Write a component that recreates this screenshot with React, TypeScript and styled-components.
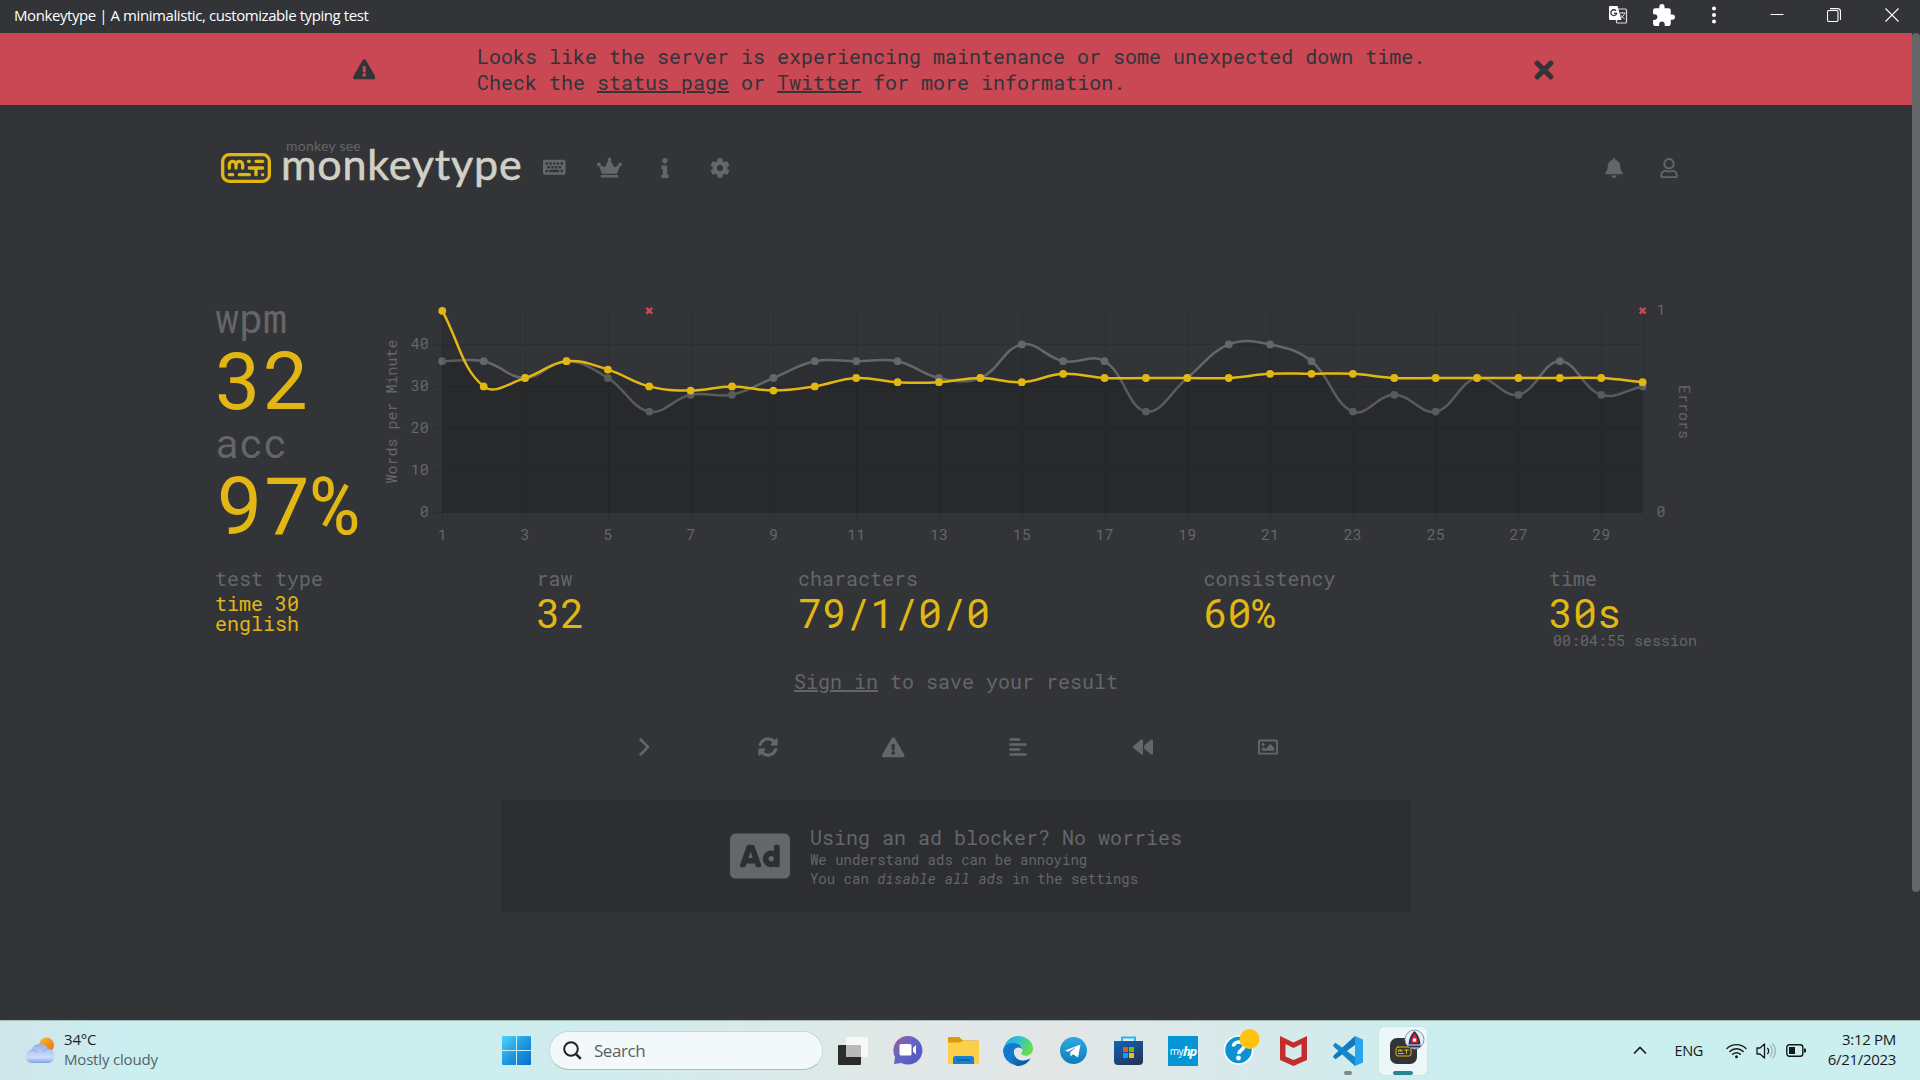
import React from "react";
import styled, { createGlobalStyle } from "styled-components";
import { FaAd, FaExclamationTriangle, FaTimes, FaKeyboard, FaCrown, FaInfo, FaCog, FaBell, FaRegUser, FaRegImage, FaSyncAlt } from "react-icons/fa";
import { FaChevronRight, FaAlignLeft, FaBackward } from "react-icons/fa6";
import { MdExtension } from "react-icons/md";

const c = {
  bg: "#323437",
  main: "#e2b714",
  sub: "#646669",
  subAlt: "#2c2e31",
  text: "#d1d0c5",
  error: "#ca4754",
};

const mono = `"Roboto Mono", "DejaVu Sans Mono", monospace`;
const ui = `"Segoe UI", "Open Sans", "Noto Sans", sans-serif`;

const Global = createGlobalStyle`
  *, *::before, *::after { box-sizing: border-box; }
  body { margin: 0; background: ${c.bg}; overflow: hidden; }
  svg { display: block; }
`;

const Screen = styled.div`
  display: flex;
  flex-direction: column;
  width: 1920px;
  height: 1080px;
  background: ${c.bg};
  font-family: ${mono};
  overflow: hidden;
`;

/* ---------- title bar ---------- */

const TitleBar = styled.header`
  display: flex;
  align-items: center;
  height: 33px;
  padding: 0 21.5px 3px 14px;
  color: #fff;
`;

const WindowTitle = styled.span`
  flex: 1;
  font: 15px/30px ${ui};
  letter-spacing: -0.42px;
  white-space: nowrap;
`;

const TitleIcon = styled.span<{ $w: number }>`
  display: flex;
  justify-content: center;
  width: ${(p) => p.$w}px;
`;

/* ---------- page ---------- */

const Viewport = styled.div`
  display: flex;
  height: 987px;
`;

const Page = styled.main`
  display: flex;
  flex-direction: column;
  width: 1912px;
`;

const ScrollThumb = styled.div`
  width: 8px;
  height: 859px;
  border-radius: 4px;
  background: ${c.sub};
`;

const Banner = styled.div`
  display: grid;
  grid-template-columns: 23px 1fr 28px;
  align-items: center;
  height: 72px;
  padding: 1px 354px 0 352.5px;
  background: ${c.error};
  color: ${c.bg};
`;

const BannerText = styled.p`
  margin: 0;
  padding: 0 0 1px 101.5px;
  font-size: 20px;
  line-height: 26px;
  white-space: nowrap;
`;

const Link = styled.a`
  text-decoration: underline;
`;

const Content = styled.div`
  display: flex;
  flex-direction: column;
  width: 1482px;
  margin: 0 auto;
`;

const Top = styled.div`
  display: flex;
  align-items: center;
  height: 62px;
  margin-top: 31.5px;
  padding-right: 1px;
  color: ${c.sub};
`;

const Brand = styled.div`
  display: flex;
  align-items: center;
  width: 312px;
  padding-left: 6px;
  gap: 10px;
`;

const BrandWords = styled.div`
  display: flex;
  flex-direction: column;
  margin-top: -12px;
`;

const Tagline = styled.span`
  padding-left: 5px;
  font: 14px/16px Lato, sans-serif;
  letter-spacing: 0.25px;
  color: ${c.sub};
  white-space: nowrap;
`;

const BrandName = styled.span`
  margin-top: -12px;
  font: 43px/44px Lato, sans-serif;
  letter-spacing: 0.85px;
  -webkit-text-stroke: 0.6px ${c.text};
  color: ${c.text};
  white-space: nowrap;
`;

const NavButton = styled.button`
  display: flex;
  align-items: center;
  justify-content: center;
  width: 55px;
  height: 40px;
  padding: 0;
  border: 0;
  background: none;
  color: inherit;
  font-size: 20px;
`;

const NavSpacer = styled.div`
  flex: 1;
`;

const NavEnd = styled.div`
  display: flex;
`;

/* ---------- result ---------- */

const Result = styled.section`
  display: flex;
  height: 256px;
  margin-top: 98.5px;
`;

const Scores = styled.div`
  width: 165px;
  margin-top: -0.7px;
`;

const ScoreLabel = styled.div`
  font-size: 40px;
  line-height: 43px;
  color: ${c.sub};
`;

const ScoreValue = styled.div`
  margin-bottom: 3.4px;
  font-size: 80px;
  line-height: 78.6px;
  color: ${c.main};
  white-space: nowrap;
`;

const ChartText = styled.text`
  font-family: ${mono};
  font-size: 15px;
  fill: ${c.sub};
`;

const Stats = styled.section`
  display: flex;
  justify-content: space-between;
  height: 86px;
  margin-top: 12px;
`;

const Stat = styled.div`
  white-space: nowrap;
`;

const StatLabel = styled.div`
  font-size: 20px;
  line-height: 26px;
  color: ${c.sub};
`;

const StatValue = styled.div`
  font-size: 40px;
  line-height: 43px;
  color: ${c.main};
`;

const StatLines = styled.div`
  padding-top: 2px;
  font-size: 20px;
  line-height: 20px;
  color: ${c.main};
`;

const Session = styled.div`
  margin: -4px 0 0 4px;
  font-size: 15px;
  line-height: 20px;
  color: ${c.sub};
`;

const SignIn = styled.p`
  margin: 17px 0 0;
  text-align: center;
  font-size: 20px;
  line-height: 26px;
  color: ${c.sub};
`;

const Actions = styled.div`
  display: flex;
  justify-content: center;
  margin-top: 28px;
  padding-right: 0.4px;
  color: ${c.sub};
`;

const Action = styled.button`
  display: flex;
  align-items: center;
  justify-content: center;
  width: 125px;
  height: 50px;
  padding: 0;
  border: 0;
  background: none;
  color: inherit;
  font-size: 20px;
`;

const AdNotice = styled.aside`
  display: flex;
  align-items: center;
  justify-content: center;
  gap: 20px;
  width: 910px;
  height: 112px;
  margin: 28px auto 0;
  background: ${c.subAlt};
  color: ${c.sub};
  font-size: 60px;
`;

const AdText = styled.div`
  font-size: 14px;
  line-height: 19px;
  white-space: nowrap;
`;

const AdTitle = styled.div`
  font-size: 20px;
  line-height: 26px;
`;

const AdLink = styled.i`
  letter-spacing: 0.22px;
`;

/* ---------- taskbar ---------- */

const Taskbar = styled.footer`
  display: flex;
  align-items: center;
  height: 60px;
  border-top: 1px solid #a9bbbd;
  background: linear-gradient(90deg, #d0e5ea 0, #cbeef0 120px, #cbeeef 480px, #d3ebec 640px, #e0e8e7 880px, #e2e7e6 1060px, #d5eaeb 1290px, #cbeeef 1460px, #cbeeef 1920px);
  font-family: ${ui};
`;

const Weather = styled.div`
  display: flex;
  align-items: center;
  gap: 8px;
  width: 489px;
  padding-left: 25px;
`;

const WeatherText = styled.div`
  display: flex;
  flex-direction: column;
  margin-top: -3px;
  font-size: 15px;
  line-height: 20px;
  letter-spacing: -0.18px;
  color: #1b1f20;
`;

const Muted = styled.span`
  color: #556263;
`;

const Slot = styled.div<{ $active?: boolean }>`
  position: relative;
  display: flex;
  align-items: center;
  justify-content: center;
  width: ${(p) => (p.$active ? 48 : 55)}px;
  height: 48px;
  margin-left: ${(p) => (p.$active ? 3.5 : 0)}px;
  border-radius: 5px;
  background: ${(p) => (p.$active ? "rgba(255,255,255,0.6)" : "none")};
  box-shadow: ${(p) => (p.$active ? "0 0 1px rgba(0,0,0,0.25)" : "none")};
`;

const Badged = styled.span<{ $ml: number }>`
  margin: -6px 0 0 ${(p) => p.$ml}px;
`;

const Indicator = styled.i<{ $w: number; $color: string }>`
  position: absolute;
  bottom: 0;
  left: 50%;
  width: ${(p) => p.$w}px;
  height: 4px;
  margin-left: ${(p) => -p.$w / 2}px;
  border-radius: 2px;
  background: ${(p) => p.$color};
`;

const Search = styled.div`
  display: flex;
  align-items: center;
  gap: 12px;
  width: 274px;
  height: 39px;
  margin: 0 2.5px 0 5px;
  padding-left: 13px;
  border: 1px solid #c3d9dc;
  border-bottom-color: #a9bcbe;
  border-radius: 20px;
  background: #f3f9fa;
  color: #596162;
  font-size: 17px;
  letter-spacing: -0.45px;
`;

const Tray = styled.div`
  display: flex;
  align-items: center;
  margin-left: auto;
  padding-right: 24px;
  font-size: 14.5px;
  letter-spacing: -0.3px;
  color: #16191a;
`;

const TrayItem = styled.div<{ $ml: number }>`
  margin-left: ${(p) => p.$ml}px;
`;

const Clock = styled.div`
  display: flex;
  flex-direction: column;
  align-items: flex-end;
  width: 89px;
  margin-top: -4px;
  font-size: 15px;
  line-height: 20px;
`;

/* ---------- chart ---------- */

const wpm = [48, 30, 32, 36, 34, 30, 29, 30, 29, 30, 32, 31, 31, 32, 31, 33, 32, 32, 32, 32, 33, 33, 33, 32, 32, 32, 32, 32, 32, 31];
const raw = [36, 36, 32, 36, 32, 24, 28, 28, 32, 36, 36, 36, 32, 32, 40, 36, 36, 24, 32, 40, 40, 36, 24, 28, 24, 32, 28, 36, 28, 30];
const errorSeconds = [6, 30];

const px = (second: number) => 442.3 + (second - 1) * 41.39;
const py = (value: number) => 512.4 - value * 4.2;

type Point = { x: number; y: number };

/** Cubic spline through the points with control points clamped to the plot. */
function spline(points: Point[], tension = 0.4) {
  const top = py(48);
  const bottom = py(0);
  const clamp = (y: number) => Math.max(top, Math.min(bottom, y));
  const ctrl = points.map((p, i) => {
    const a = points[Math.max(i - 1, 0)];
    const b = points[Math.min(i + 1, points.length - 1)];
    const d0 = Math.hypot(p.x - a.x, p.y - a.y);
    const d1 = Math.hypot(b.x - p.x, b.y - p.y);
    const f0 = (tension * d0) / (d0 + d1);
    const f1 = (tension * d1) / (d0 + d1);
    return {
      px: p.x - f0 * (b.x - a.x),
      py: clamp(p.y - f0 * (b.y - a.y)),
      nx: p.x + f1 * (b.x - a.x),
      ny: clamp(p.y + f1 * (b.y - a.y)),
    };
  });
  return points.reduce((d, p, i) => {
    if (i === 0) return `M${p.x} ${p.y}`;
    const k = ctrl[i - 1];
    const n = ctrl[i];
    return `${d}C${k.nx} ${k.ny} ${n.px} ${n.py} ${p.x} ${p.y}`;
  }, "");
}

function Series({ values, color }: { values: number[]; color: string }) {
  const points = values.map((v, i) => ({ x: px(i + 1), y: py(v) }));
  const line = spline(points);
  return (
    <g>
      <path d={`${line}L${px(30)} ${py(0)}L${px(1)} ${py(0)}Z`} fill="#030300" fillOpacity={0.105} />
      <path d={line} fill="none" stroke={color} strokeWidth={2.5} strokeLinejoin="round" />
      {points.map((p) => (
        <circle key={p.x} cx={p.x} cy={p.y} r={3.9} fill={color} />
      ))}
    </g>
  );
}

function Chart() {
  const odd = Array.from({ length: 15 }, (_, i) => i * 2 + 1);
  return (
    <svg width="1316" height="256" viewBox="380 297 1316 256">
      <g stroke="#2c2e30" strokeWidth={1}>
        {[0, 10, 20, 30, 40].map((v) => (
          <line key={v} x1={433} x2={1642.5} y1={py(v) + 0.1} y2={py(v) + 0.1} />
        ))}
        {[...odd, 30].map((s) => (
          <line key={s} x1={Math.round(px(s)) + 0.5} x2={Math.round(px(s)) + 0.5} y1={311} y2={s === 30 ? 512 : 522} />
        ))}
      </g>
      <Series values={raw} color={c.sub} />
      <Series values={wpm} color={c.main} />
      {errorSeconds.map((s) => (
        <path key={s} d={`M${px(s) - 2.9} ${py(48) - 2.9}l5.8 5.8m0 -5.8l-5.8 5.8`} stroke={c.error} strokeWidth={2.6} />
      ))}
      {[0, 10, 20, 30, 40].map((v) => (
        <ChartText key={v} x={428.7} y={py(v) + 5} textAnchor="end">{v}</ChartText>
      ))}
      {odd.map((s) => (
        <ChartText key={s} x={px(s)} y={540} textAnchor="middle">{s}</ChartText>
      ))}
      <ChartText x={1656.5} y={315.3}>1</ChartText>
      <ChartText x={1656.5} y={517}>0</ChartText>
      <ChartText transform="translate(397 411.6) rotate(-90)" textAnchor="middle">Words per Minute</ChartText>
      <ChartText transform="translate(1679 412) rotate(90)" textAnchor="middle">Errors</ChartText>
    </svg>
  );
}

/* ---------- drawings ---------- */

const LogoMark = () => (
  <svg width="50" height="30" viewBox="-680 -1030 300 180" fill="none" stroke={c.main} strokeWidth={20} strokeLinecap="round">
    <rect x={-670} y={-1020} width={280} height={160} rx={40} />
    <path d="M-630 -940V-960a20 20 0 0 1 40 0V-940M-590 -960a20 20 0 0 1 40 0V-940" />
    <path d="M-515 -980H-510M-470 -980H-430M-510 -940H-430M-470 -940V-900M-430 -900h.1M-570 -900H-510M-630 -900H-610" />
  </svg>
);

const TranslateIcon = () => (
  <svg width="20" height="20" viewBox="0 0 20 20">
    <rect x="8.5" y="4" width="10" height="14" rx="1" fill="none" stroke="#dcdcdc" strokeWidth="1.2" />
    <path d="M11.5 8h6M14.5 7v1M16.6 8c-.5 2.500-2 4-4.400 5.500M12.600 9.800c1 1.800 2.400 3 4 4" stroke="#dcdcdc" strokeWidth="1" fill="none" />
    <path d="M2 1h7.500l4 14H2a1 1 0 0 1-1-1V2a1 1 0 0 1 1-1z" fill="#fff" />
    <path d="M8 5.800A2.900 2.900 0 1 0 8.600 8.300H6" stroke={c.bg} strokeWidth="1.300" fill="none" />
  </svg>
);

const WeatherIcon = () => (
  <svg width="31" height="27" viewBox="0 0 31 27">
    <defs>
      <linearGradient id="sun" x1="0" y1="0" x2="1" y2="1"><stop offset="0" stopColor="#f6bd2c" /><stop offset="1" stopColor="#ee6a12" /></linearGradient>
      <linearGradient id="cloud" x1="0" y1="0" x2="0" y2="1"><stop offset="0" stopColor="#8fb1ee" /><stop offset=".7" stopColor="#cfdef8" /><stop offset="1" stopColor="#7fa2e8" /></linearGradient>
    </defs>
    <circle cx="21.500" cy="8" r="7.500" fill="url(#sun)" />
    <path d="M7 26a6.500 6.500 0 0 1-1-12.900A9.500 9.500 0 0 1 23 11.500 7.300 7.300 0 0 1 23.500 26z" fill="url(#cloud)" />
    <path d="M5.500 13.500c3-.8 6 .2 8 2.500M17 15c1.500-2 4-3.200 6.500-3" stroke="#7d9fe4" strokeWidth="1" fill="none" opacity=".7" />
  </svg>
);

const StartIcon = () => (
  <svg width="29" height="29" viewBox="0 0 29 29">
    <defs>
      <linearGradient id="win" x1="0" y1="0" x2="1" y2="1"><stop offset="0" stopColor="#4fd2fb" /><stop offset=".55" stopColor="#1a95e0" /><stop offset="1" stopColor="#0670cd" /></linearGradient>
    </defs>
    <path fill="url(#win)" d="M1 0h13v14H0V1a1 1 0 0 1 1-1zM15 0h13a1 1 0 0 1 1 1v13H15zM0 15h14v14H1a1 1 0 0 1-1-1zM15 15h14v13a1 1 0 0 1-1 1H15z" />
  </svg>
);

const SearchIcon = () => (
  <svg width="19" height="19" viewBox="0 0 19 19" fill="none" stroke="#222" strokeWidth="2">
    <circle cx="8" cy="8" r="6.800" />
    <path d="M12.800 12.800l5 5" strokeWidth="2.600" />
  </svg>
);

const TaskViewIcon = () => (
  <svg width="30" height="28" viewBox="0 0 30 28">
    <rect y="8" width="23" height="20" rx="1" fill="#2b2b29" />
    <rect x="8" width="22" height="20" rx="1" fill="#f7f7f7" />
    <rect x="8" y="8" width="15" height="12" fill="#b9b9b7" />
  </svg>
);

const ChatIcon = () => (
  <svg width="30" height="29" viewBox="0 0 30 29">
    <defs><linearGradient id="chat" x1="0" y1="0" x2="1" y2="1"><stop offset="0" stopColor="#9a5f9f" /><stop offset=".5" stopColor="#6264c4" /><stop offset="1" stopColor="#4f52c9" /></linearGradient></defs>
    <path d="M15 0a14.300 14.300 0 1 1-6.500 27L1 28l1-7A14.300 14.300 0 0 1 15 0z" fill="url(#chat)" />
    <rect x="6.500" y="8" width="12" height="11.500" rx="1.500" fill="#fff" />
    <path d="M20 12l3-3v9.500l-3-3z" fill="#fff" />
  </svg>
);

const FolderIcon = () => (
  <svg width="31" height="27" viewBox="0 0 31 27">
    <path d="M1 0h10l4 3.500H30a1 1 0 0 1 1 1V12H0V1a1 1 0 0 1 1-1z" fill="#dd9a0c" />
    <path d="M0 5.500h12l3-1.500h16v22a1 1 0 0 1-1 1H1a1 1 0 0 1-1-1z" fill="#fccf4b" />
    <path d="M5 27v-5.500a2.500 2.500 0 0 1 2.500-2.500h16a2.500 2.500 0 0 1 2.500 2.500V27z" fill="#1583cf" />
    <path d="M9 23h13" stroke="#0a5798" strokeWidth="1.300" />
  </svg>
);

const EdgeIcon = () => (
  <svg width="30" height="30" viewBox="0 0 30 30">
    <defs>
      <linearGradient id="edgeTop" x1="0" y1="0" x2="1" y2=".4"><stop offset="0" stopColor="#1fa6dc" /><stop offset=".5" stopColor="#2fc1d0" /><stop offset="1" stopColor="#68dc4f" /></linearGradient>
      <linearGradient id="edgeLow" x1="0" y1="0" x2="1" y2="1"><stop offset="0" stopColor="#1386d8" /><stop offset="1" stopColor="#0d4a91" /></linearGradient>
    </defs>
    <path d="M1 12A14.700 14.700 0 0 1 15 0c8.500 0 15 5.800 15 12.500 0 4.300-3.200 7.300-7 7.300-3 0-4.600-1.200-4.600-2.300 0-.9 1.100-1.500 1.100-3.700 0-3-3.200-5.800-8-5.800C7 8 3 9.500 1 12z" fill="url(#edgeTop)" />
    <path d="M0 15c0-4.500 4.500-8 10-8 5.400 0 9 3 9.300 6.500-1-1.500-2.600-2.200-4.300-2-3.500.3-5 3.500-4 7.200C12.300 23 17 25.500 22 24.500c2-.4 3.800-1.300 5.500-2A15 15 0 0 1 0 15z" fill="#1279cf" />
    <path d="M10.800 14c-.8 6 3.700 11.300 10.200 10.800 2.500-.2 4.800-1.300 6.500-2.300A15 15 0 0 1 14 29.900C8 27.500 6 19 10.800 14z" fill="url(#edgeLow)" />
  </svg>
);

const TelegramIcon = () => (
  <svg width="27" height="27" viewBox="0 0 27 27">
    <defs><linearGradient id="tg" x1="0" y1="0" x2="0" y2="1"><stop offset="0" stopColor="#2fa9e4" /><stop offset="1" stopColor="#0c7db9" /></linearGradient></defs>
    <circle cx="13.500" cy="13.500" r="13.500" fill="url(#tg)" />
    <path d="M5 13.500L20.500 7.500 18 20.500l-5-3.300-2.500 2.400-.3-4.300 6-5.300-8 4.800z" fill="#fff" />
  </svg>
);

const StoreIcon = () => (
  <svg width="29" height="29" viewBox="0 0 29 29">
    <defs><linearGradient id="store" x1="0" y1="0" x2=".6" y2="1"><stop offset="0" stopColor="#0f65b8" /><stop offset="1" stopColor="#24365c" /></linearGradient></defs>
    <path d="M8 6V1.500h13V6" fill="none" stroke="#27b8ee" strokeWidth="2" />
    <path d="M0 5h29v20a4 4 0 0 1-4 4H4a4 4 0 0 1-4-4z" fill="url(#store)" />
    <path d="M9 11h5v5H9z" fill="#f25022" /><path d="M15 11h5v5h-5z" fill="#7fba00" />
    <path d="M9 17h5v5H9z" fill="#00a4ef" /><path d="M15 17h5v5h-5z" fill="#ffb900" />
  </svg>
);

const HpTile = styled.div`
  display: flex;
  align-items: center;
  justify-content: center;
  width: 30px;
  height: 30px;
  background: #0496d4;
  color: #fff;
  font: 10px/30px ${ui};
  letter-spacing: -0.6px;
`;

const HpBold = styled.b`
  font-size: 13px;
  font-style: italic;
  letter-spacing: -1.2px;
`;

const HelpIcon = () => (
  <svg width="37" height="37" viewBox="0 0 37 37">
    <circle cx="15.500" cy="21" r="14" fill="#0a92d2" stroke="#fff" strokeWidth="1.500" />
    <path d="M10.500 17.500c0-6 10.500-6 10.500-.5 0 4-5.300 4-5.300 8" fill="none" stroke="#fff" strokeWidth="3.600" />
    <circle cx="15.500" cy="29" r="2.400" fill="#fff" />
    <circle cx="26.500" cy="10" r="10" fill="#ffc20e" />
  </svg>
);

const ShieldIcon = () => (
  <svg width="27" height="30" viewBox="0 0 27 30">
    <path d="M0 0l13.500 6.500L27 0v24l-13.500 6L0 24zM5.500 8v12.500l8 3.600 8-3.600V8l-8 4z" fillRule="evenodd" fill="#c22d2e" />
  </svg>
);

const CodeIcon = () => (
  <svg width="30" height="30" viewBox="0 0 30 30">
    <path d="M22 0L1 19l-1 2 2.500 2.200L22 9z" fill="#1279bd" />
    <path d="M22 30L1 11 0 9l2.500-2.200L22 21z" fill="#1287cd" />
    <path d="M22 0l8 3.500v23L22 30z" fill="#28a4ee" />
  </svg>
);

const MonkeyAppIcon = () => (
  <svg width="36" height="40" viewBox="0 0 36 40">
    <rect x="0" y="10" width="27" height="26" rx="7" fill="#323437" />
    <g fill="none" stroke={c.main} strokeLinecap="round" strokeWidth="1">
      <rect x="6" y="19" width="15" height="9" rx="2" />
      <path d="M8.500 23.500v-1.500h3.500v1.500M10.200 22v1.500M14.500 22h4M16.500 22v3.500M8.500 25.500h5" />
    </g>
    <circle cx="24.500" cy="11.500" r="9.500" fill="#e9eef3" stroke="#8f9699" strokeWidth="1" />
    <path d="M24.500 3c4 4 5.500 8 6 13.500h-12c.5-5.500 2-9.500 6-13.500z" fill="#27305f" />
    <path d="M24.500 5.500c2 2.500 3.500 5.500 3.500 9.500h-7c0-4 1.500-7 3.500-9.500z" fill="#e0242c" />
    <circle cx="24.500" cy="12" r="1.800" fill="#fff" />
    <path d="M17.500 17.500h14l-2 2h-10z" fill="#27305f" />
  </svg>
);

const WifiIcon = () => (
  <svg width="21" height="16" viewBox="0 0 21 16" fill="none" stroke="#16191a" strokeWidth="1.400" strokeLinecap="round">
    <path d="M1 5.500a13.500 13.500 0 0 1 19 0M3.800 8.500a9.500 9.500 0 0 1 13.400 0M6.600 11.300a5.500 5.500 0 0 1 7.800 0" />
    <circle cx="10.500" cy="13.800" r="1.500" fill="#16191a" stroke="none" />
  </svg>
);

const VolumeIcon = () => (
  <svg width="21" height="18" viewBox="0 0 21 18" fill="none" stroke="#16191a" strokeWidth="1.300">
    <path d="M1 6h3l4.500-4v14L4 12H1z" strokeLinejoin="round" />
    <path d="M11.300 6a4 4 0 0 1 0 6" />
    <path d="M13.800 3.500a7.500 7.500 0 0 1 0 11M16.300 1.500a10.500 10.500 0 0 1 0 15" stroke="#9fb8bb" />
  </svg>
);

const BatteryIcon = () => (
  <svg width="21" height="13" viewBox="0 0 21 13">
    <rect x=".8" y=".8" width="16" height="11.400" rx="2.500" fill="none" stroke="#16191a" strokeWidth="1.400" />
    <rect x="3" y="3" width="6" height="7" fill="#16191a" />
    <path d="M18 4.500h1.500a1 1 0 0 1 .5 1v2a1 1 0 0 1-.5 1H18z" fill="#16191a" />
  </svg>
);

export default function App() {
  return (
    <Screen>
      <Global />
      <TitleBar>
        <WindowTitle>Monkeytype | A minimalistic, customizable typing test</WindowTitle>
        <TitleIcon $w={45}><TranslateIcon /></TitleIcon>
        <TitleIcon $w={46}><MdExtension size={25} /></TitleIcon>
        <TitleIcon $w={54}>
          <svg width="4" height="18" viewBox="0 0 4 18" fill="#fff"><circle cx="2" cy="2.500" r="2" /><circle cx="2" cy="9" r="2" /><circle cx="2" cy="15.500" r="2" /></svg>
        </TitleIcon>
        <TitleIcon $w={73}>
          <svg width="14" height="14" viewBox="0 0 14 14"><path d="M0.500 6.500h13" stroke="#fff" /></svg>
        </TitleIcon>
        <TitleIcon $w={40}>
          <svg width="14" height="14" viewBox="0 0 14 14" fill="none" stroke="#fff" strokeWidth="1.100"><rect x=".5" y="2.500" width="10.500" height="11" rx="1.500" /><path d="M3 .6h7.500a3 3 0 0 1 3 3V12" /></svg>
        </TitleIcon>
        <TitleIcon $w={31} />
        <svg width="14" height="14" viewBox="0 0 14 14"><path d="M.5.5l13 13M13.500.5l-13 13" stroke="#fff" strokeWidth="1.100" /></svg>
      </TitleBar>

      <Viewport>
        <Page>
          <Banner>
            <FaExclamationTriangle size={22.5} />
            <BannerText>
              Looks like the server is experiencing maintenance or some unexpected down time.
              <br />
              Check the <Link>status page</Link> or <Link>Twitter</Link> for more information.
            </BannerText>
            <FaTimes size={28} />
          </Banner>

          <Content>
            <Top>
              <Brand>
                <LogoMark />
                <BrandWords>
                  <Tagline>monkey see</Tagline>
                  <BrandName>monkeytype</BrandName>
                </BrandWords>
              </Brand>
              <NavButton><FaKeyboard size={22.5} /></NavButton>
              <NavButton><FaCrown size={25} /></NavButton>
              <NavButton><FaInfo /></NavButton>
              <NavButton><FaCog /></NavButton>
              <NavSpacer />
              <NavEnd>
                <NavButton><FaBell /></NavButton>
                <NavButton><FaRegUser /></NavButton>
              </NavEnd>
            </Top>

            <Result>
              <Scores>
                <ScoreLabel>wpm</ScoreLabel>
                <ScoreValue>32</ScoreValue>
                <ScoreLabel>acc</ScoreLabel>
                <ScoreValue>97%</ScoreValue>
              </Scores>
              <Chart />
            </Result>

            <Stats>
              <Stat>
                <StatLabel>test type</StatLabel>
                <StatLines>time 30<br />english</StatLines>
              </Stat>
              <Stat>
                <StatLabel>raw</StatLabel>
                <StatValue>32</StatValue>
              </Stat>
              <Stat>
                <StatLabel>characters</StatLabel>
                <StatValue>79/1/0/0</StatValue>
              </Stat>
              <Stat>
                <StatLabel>consistency</StatLabel>
                <StatValue>60%</StatValue>
              </Stat>
              <Stat>
                <StatLabel>time</StatLabel>
                <StatValue>30s</StatValue>
                <Session>00:04:55 session</Session>
              </Stat>
            </Stats>

            <SignIn><Link>Sign in</Link> to save your result</SignIn>

            <Actions>
              <Action><FaChevronRight /></Action>
              <Action><FaSyncAlt /></Action>
              <Action><FaExclamationTriangle size={22.5} /></Action>
              <Action><FaAlignLeft /></Action>
              <Action><FaBackward /></Action>
              <Action><FaRegImage /></Action>
            </Actions>

            <AdNotice>
              <FaAd />
              <AdText>
                <AdTitle>Using an ad blocker? No worries</AdTitle>
                We understand ads can be annoying
                <br />
                You can <AdLink>disable all ads</AdLink> in the settings
              </AdText>
            </AdNotice>
          </Content>
        </Page>
        <ScrollThumb />
      </Viewport>

      <Taskbar>
        <Weather>
          <WeatherIcon />
          <WeatherText>
            <span>34°C</span>
            <Muted>Mostly cloudy</Muted>
          </WeatherText>
        </Weather>
        <Slot><StartIcon /></Slot>
        <Search><SearchIcon />Search</Search>
        <Slot><TaskViewIcon /></Slot>
        <Slot><ChatIcon /></Slot>
        <Slot><FolderIcon /></Slot>
        <Slot><EdgeIcon /></Slot>
        <Slot><TelegramIcon /></Slot>
        <Slot><StoreIcon /></Slot>
        <Slot><HpTile>my<HpBold>hp</HpBold></HpTile></Slot>
        <Slot><Badged $ml={7}><HelpIcon /></Badged></Slot>
        <Slot><ShieldIcon /></Slot>
        <Slot><CodeIcon /><Indicator $w={8} $color="#7d898b" /></Slot>
        <Slot $active><Badged $ml={9}><MonkeyAppIcon /></Badged><Indicator $w={20} $color="#2a8494" /></Slot>
        <Tray>
          <svg width="14" height="9" viewBox="0 0 14 9"><path d="M1 7.500l6-6 6 6" fill="none" stroke="#16191a" strokeWidth="1.600" /></svg>
          <TrayItem $ml={27}>ENG</TrayItem>
          <TrayItem $ml={23}><WifiIcon /></TrayItem>
          <TrayItem $ml={9}><VolumeIcon /></TrayItem>
          <TrayItem $ml={9}><BatteryIcon /></TrayItem>
          <Clock>
            <span>3:12 PM</span>
            <span>6/21/2023</span>
          </Clock>
        </Tray>
      </Taskbar>
    </Screen>
  );
}
